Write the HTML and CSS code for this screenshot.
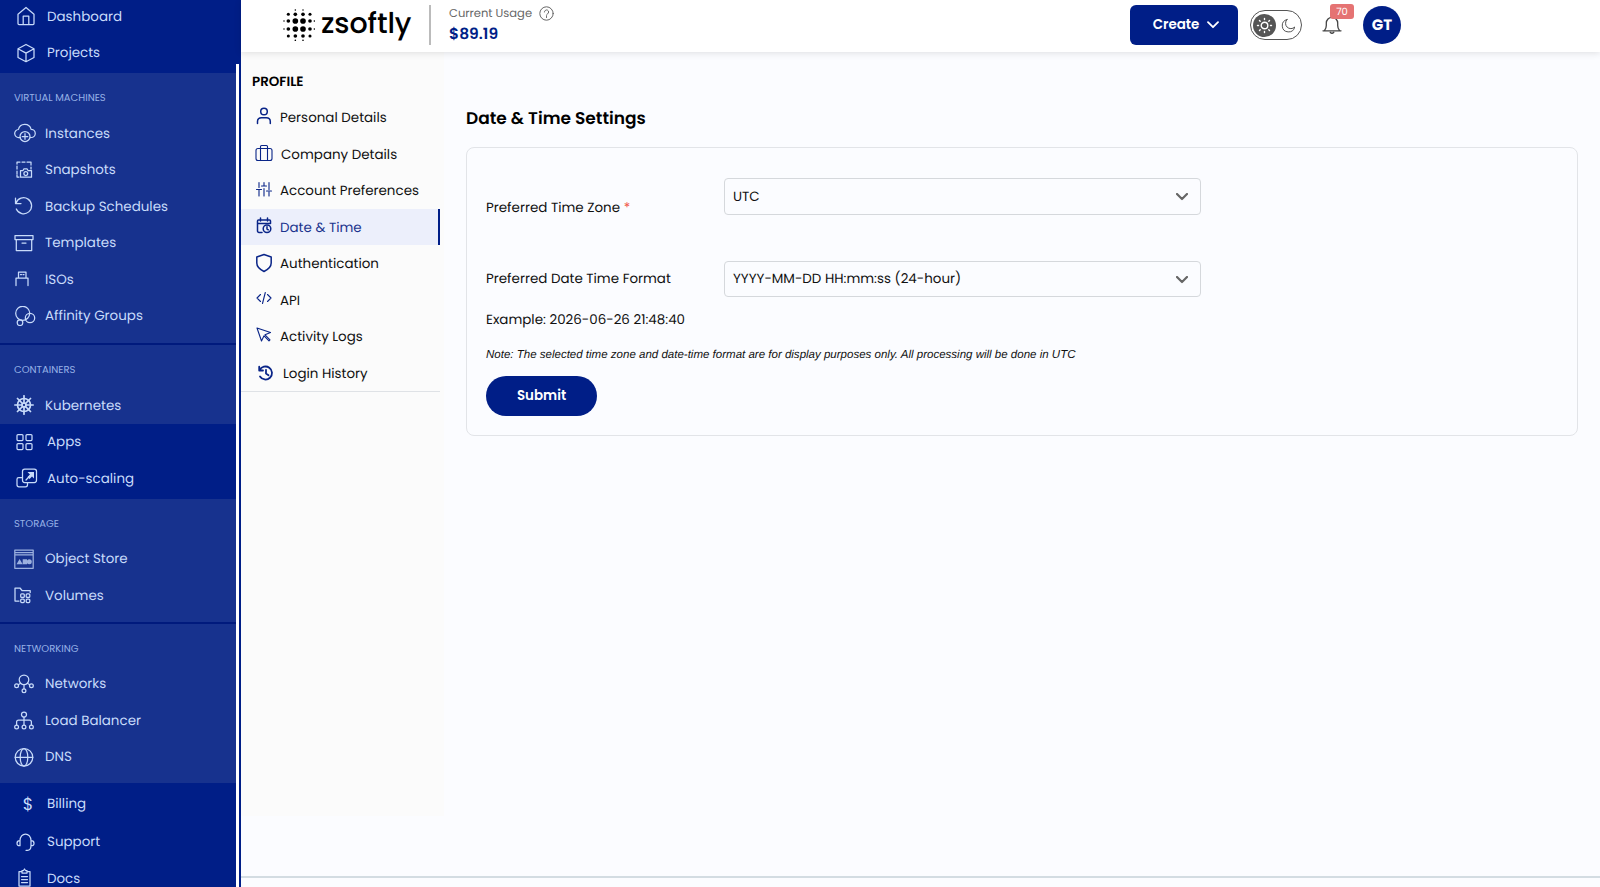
FILE: index.html
```html
<!DOCTYPE html>
<html lang="en">
<head>
    <meta charset="UTF-8">
    <meta name="viewport" content="width=device-width, initial-scale=1.0">
    <title>Date &amp; Time Settings</title>
    <link rel="stylesheet" href="styles.css">
</head>
<body>
    <div class="app">
        <aside class="sidebar">
            <nav class="menu">
                <div class="top-links">
                    <a class="item"><svg class="icon" viewBox="0 0 20 20"><path d="M2 8.2 10 1.500l8 6.700v9.300a1 1 0 0 1-1 1H3a1 1 0 0 1-1-1zM7.200 18.500V10h5.600v8.500"/></svg><span>Dashboard</span></a>
                    <a class="item"><svg class="icon" viewBox="0 0 20 20"><path d="M10 1.500 18 5.800v8.700l-8 4.200-8-4.200V5.800zM2 5.800l8 4.300 8-4.300M10 10.100v8.600"/></svg><span>Projects</span></a>
                </div>
                <div class="group first">
                    <h3>VIRTUAL MACHINES</h3>
                    <a class="item"><svg class="icon wide" viewBox="0 0 22 20"><path d="M6.500 14.500H5a4 4 0 0 1-.6-8 6.500 6.500 0 0 1 12.700-.2 4.100 4.100 0 0 1 .1 8.200h-.700"/><circle cx="11" cy="13.500" r="5"/><path d="M11 10.700v5.600M8.200 13.500h5.600"/></svg><span>Instances</span></a>
                    <a class="item"><svg class="icon" viewBox="0 0 20 20"><path d="M3 4V2h3M8 2h3M13 2h4v3M17 7v2M3 6v3M3 11v3M3 15v2h2"/><path d="M6.500 10.500H9l1-1.700h3l1 1.700h3.500v6.700h-11z"/><circle cx="11.800" cy="13.600" r="1.900"/></svg><span>Snapshots</span></a>
                    <a class="item"><svg class="icon" viewBox="0 0 20 20"><path d="M1.500 2v5.500H7M2 7.300A8 8 0 1 1 2.300 13"/></svg><span>Backup Schedules</span></a>
                    <a class="item"><svg class="icon" viewBox="0 0 20 20"><path d="M1 2.500h18v4H1zM2.300 6.500v11h15.400v-11M8 10h4"/></svg><span>Templates</span></a>
                    <a class="item"><svg class="icon" viewBox="0 0 20 20"><path d="M4.500 9V3h7.500v6M2 16.500V9h12v7.500M6.500 5.500h1M9 5.500h1"/></svg><span>ISOs</span></a>
                    <a class="item"><svg class="icon wide" viewBox="0 0 22 20"><circle cx="8.700" cy="7.300" r="7"/><circle cx="16" cy="12" r="4.700"/><circle cx="6" cy="16.700" r="2.800"/></svg><span>Affinity Groups</span></a>
                </div>
                <div class="group short">
                    <h3>CONTAINERS</h3>
                    <a class="item"><svg class="icon wheel" viewBox="0 0 20 20"><circle cx="10" cy="10" r="6.500"/><circle cx="10" cy="10" r="2"/><path d="M10 .8V8M10 12v7.200M.8 10H8M12 10h7.200M3.500 3.500l5 5M11.500 11.500l5 5M16.500 3.500l-5 5M8.500 11.500l-5 5"/></svg><span>Kubernetes</span></a>
                </div>
                <div class="plain">
                    <a class="item"><svg class="icon left" viewBox="0 0 20 20"><rect x="2" y="2.500" width="6" height="6" rx="1"/><rect x="11" y="2.500" width="6" height="6" rx="1"/><rect x="2" y="11.500" width="6" height="6" rx="1"/><rect x="11" y="11.500" width="6" height="6" rx="1"/></svg><span>Apps</span></a>
                    <a class="item"><svg class="icon wide" viewBox="0 0 22 20"><rect x="6.500" y="1" width="14" height="13.500" rx="2.200"/><path d="M6.500 9.500H2.700A1.700 1.700 0 0 0 1 11.200v5.600a2 2 0 0 0 2 2h6.500a2 2 0 0 0 2-2v-2.300M10 12l6.500-7"/><path class="fill" d="M11.500 4H18v6.500l-2-2-2.500 2.500-2-2L14 6.500z"/></svg><span>Auto-scaling</span></a>
                </div>
                <div class="group">
                    <h3>STORAGE</h3>
                    <a class="item"><svg class="icon store" viewBox="0 0 20 20"><path d="M.8 1h18.400v18.300H.8zM1 3.500h18M1 5.800h18"/><path class="fill" d="m2.500 15.300 3.100-5.300 3.100 5.300zM8.700 10.200H13v5.100H8.700z"/><circle class="fill" cx="15.300" cy="12.700" r="2.500"/></svg><span>Object Store</span></a>
                    <a class="item"><svg class="icon" viewBox="0 0 20 20"><path d="M5 16H1V3h5l2 2.500h8.200V7.500"/><rect x="6.700" y="8.800" width="3.600" height="3.600" rx="1"/><rect x="12.200" y="8.800" width="3.600" height="3.600" rx="1"/><rect x="6.700" y="14" width="3.600" height="3.600" rx="1"/><rect x="12.200" y="14" width="3.600" height="3.600" rx="1"/></svg><span>Volumes</span></a>
                </div>
                <div class="group last">
                    <h3>NETWORKING</h3>
                    <a class="item"><svg class="icon" viewBox="0 0 20 20"><circle cx="10" cy="5.800" r="4.800"/><path d="M6.700 9.300l-2.500 1.500M13.300 9.300l2.500 1.500M10 10.600V15"/><circle cx="2.600" cy="11.800" r="1.900"/><circle cx="17.400" cy="11.800" r="1.900"/><circle cx="10" cy="16.800" r="1.900"/></svg><span>Networks</span></a>
                    <a class="item"><svg class="icon" viewBox="0 0 20 20"><circle cx="10" cy="4.500" r="2.500"/><path d="M10 7v8M2.600 15v-3q0-2 2-2h10.800q2 0 2 2v3"/><circle cx="2.600" cy="16.900" r="1.900"/><circle cx="10" cy="16.900" r="1.900"/><circle cx="17.400" cy="16.900" r="1.900"/></svg><span>Load Balancer</span></a>
                    <a class="item"><svg class="icon" viewBox="0 0 20 20"><circle cx="10" cy="10.300" r="8.800"/><ellipse cx="10" cy="10.300" rx="3.800" ry="8.800"/><path d="M1.200 10.300h17.600"/></svg><span>DNS</span></a>
                </div>
                <div class="plain bottom">
                    <a class="item billing"><span class="dollar">$</span><span>Billing</span></a>
                    <a class="item support"><svg class="icon" viewBox="0 0 20 20"><path d="M4 13.500V8.500a5.500 6.500 0 0 1 11 0v5q0 4.800-3.500 4.800H10M4 8.500q-3 0-3 2.700t3 2.500M15 8.500q3 0 3 2.700t-3 2.500"/></svg><span>Support</span></a>
                    <a class="item"><svg class="icon left" viewBox="0 0 20 20"><path d="M7 3.500H4v14.500h11V3.500h-3M7 5V2.500h1.500L9.500 1l1 1.500H12V5zM6.500 8.500h6M6.500 11.500h6M6.500 14.500h6"/></svg><span>Docs</span></a>
                </div>
            </nav>
            <div class="scroll-track"></div>
        </aside>

        <div class="page">
            <header class="header">
                <div class="logo">
                    <svg width="32" height="32" viewBox="0 0 96 96">
                        <g><circle cx="37" cy="36" r="8.500"/><circle cx="60" cy="36" r="8.500"/><circle cx="37" cy="60" r="8.500"/><circle cx="60" cy="60" r="8.500"/></g>
                        <g><circle cx="16" cy="16" r="4.600"/><circle cx="37" cy="16" r="5.500"/><circle cx="60" cy="16" r="5.500"/><circle cx="81" cy="16" r="4.600"/><circle cx="16" cy="36" r="5.500"/><circle cx="81" cy="36" r="5.500"/><circle cx="16" cy="60" r="5.500"/><circle cx="81" cy="60" r="5.500"/><circle cx="16" cy="81" r="4.600"/><circle cx="37" cy="81" r="5.500"/><circle cx="60" cy="81" r="5.500"/><circle cx="81" cy="81" r="4.600"/></g>
                        <g><circle cx="37" cy="3" r="2.300"/><circle cx="60" cy="3" r="2.300"/><circle cx="37" cy="94" r="2.300"/><circle cx="60" cy="94" r="2.300"/><circle cx="3" cy="36" r="2.300"/><circle cx="3" cy="60" r="2.300"/><circle cx="94" cy="36" r="2.300"/><circle cx="94" cy="60" r="2.300"/></g>
                    </svg>
                    <span>zsoftly</span>
                </div>
                <div class="usage">
                    <div class="usage-label"><span>Current Usage</span><svg width="15" height="15" viewBox="0 0 15 15"><circle cx="7.500" cy="7.500" r="6.700"/><path d="M5.400 6a2.100 2.100 0 1 1 3.200 1.800q-1.100.6-1.100 1.500M7.500 10.500v1"/></svg></div>
                    <div class="usage-value">$89.19</div>
                </div>
                <button class="create-btn">Create<svg width="12" height="8" viewBox="0 0 12 8"><path d="m1 1.200 5 5 5-5"/></svg></button>
                <div class="theme-toggle">
                    <span class="sun"><svg width="17" height="17" viewBox="0 0 17 17"><circle cx="8.500" cy="8.500" r="3.300"/><path d="M8.500 1.500v1M8.500 14.500v1M1.500 8.500h1M14.500 8.500h1M3.500 3.500l.7.7M12.800 12.800l.7.7M13.500 3.500l-.7.7M4.200 12.800l-.7.7"/></svg></span>
                    <svg class="moon" width="15" height="15" viewBox="0 0 15 15"><path d="M6 1.500A6.300 6.300 0 1 0 13.700 9 5.300 5.300 0 0 1 6 1.500z"/></svg>
                </div>
                <div class="bell">
                    <svg width="20" height="20" viewBox="0 0 20 20"><path d="M1 15.800h18M2.500 15.500q1.800-2 1.800-5V8a5.700 5.700 0 0 1 11.400 0v2.500q0 3 1.800 5"/><path d="M8.200 17.300q1.800 2 3.600 0"/></svg>
                    <span class="badge">70</span>
                </div>
                <div class="avatar">GT</div>
            </header>

            <div class="body">
                <section class="profile">
                    <h2>PROFILE</h2>
                    <div class="profile-list">
                        <a class="link"><svg viewBox="0 0 18 18"><circle cx="9" cy="4.500" r="3.300"/><path d="M2.500 16.500v-2q0-3.800 4-3.800h4.800q4 0 4 3.800v2"/></svg><span>Personal Details</span></a>
                        <a class="link company"><svg class="thin" viewBox="0 0 18 18"><rect x="1" y="4.500" width="16" height="12" rx="2"/><path d="M5.500 16.500V2.500q0-1 1-1h5q1 0 1 1v14"/></svg><span>Company Details</span></a>
                        <a class="link"><svg class="thin" viewBox="0 0 18 18"><path d="M4 2.500v5M4 10v6M9 2.500v3M9 8.500v7.500M14 2.500v7M14 12v4M1.500 9.500h5M6.500 6h5M11.500 11h5"/></svg><span>Account Preferences</span></a>
                        <a class="link active"><svg viewBox="0 0 18 18"><path d="M7 15.500H4A1.500 1.500 0 0 1 2.500 14V4Q2.500 3 3.500 3h11q1 0 1 1v2.500M2.500 6.500h13M5.500 1v3M12.500 1v3"/><circle cx="12" cy="11.700" r="3.800"/><path d="M12 9.700v2.300l1.300.8"/></svg><span>Date &amp; Time</span></a>
                        <a class="link"><svg class="shield" viewBox="0 0 18 20"><path d="M9 1.500 16.200 4v6q0 5-7.200 8.500Q1.800 15 1.800 10V4z"/></svg><span>Authentication</span></a>
                        <a class="link"><svg class="thin" viewBox="0 0 18 18"><path d="M5.500 4.500 2 8l3.500 3.500M12.500 4.500 16 8l-3.500 3.500M10.300 2.500l-2.800 11"/></svg><span>API</span></a>
                        <a class="link"><svg class="thin" viewBox="0 0 18 18"><path d="m2 2 13.500 4.500-5.500 2.300 5 5-1 1-5-5-2.500 5.200z"/></svg><span>Activity Logs</span></a>
                        <a class="link history"><svg class="thick" viewBox="0 0 18 18"><path d="M2.200 2.700v3.800H6M2.600 6.300A6.500 6.500 0 1 1 3 12.500M9 5.800V9.500l2.500 1.700"/></svg><span>Login History</span></a>
                    </div>
                </section>

                <main class="content">
                    <h1>Date &amp; Time Settings</h1>
                    <form class="card">
                        <div class="row zone">
                            <label>Preferred Time Zone <span class="required">*</span></label>
                            <div class="select"><span>UTC</span><svg width="12" height="8" viewBox="0 0 12 8"><path d="m1 1 5 5 5-5"/></svg></div>
                        </div>
                        <div class="row format">
                            <label>Preferred Date Time Format</label>
                            <div class="select"><span>YYYY-MM-DD HH:mm:ss (24-hour)</span><svg width="12" height="8" viewBox="0 0 12 8"><path d="m1 1 5 5 5-5"/></svg></div>
                        </div>
                        <p class="example">Example: 2026-06-26 21:48:40</p>
                        <p class="note">Note: The selected time zone and date-time format are for display purposes only. All processing will be done in UTC</p>
                        <button type="button" class="submit-btn">Submit</button>
                    </form>
                </main>
            </div>
            <footer class="footer"></footer>
        </div>
    </div>
</body>
</html>
```

FILE: styles.css
```css
* {
    box-sizing: border-box;
}
body {
    margin: 0;
    height: 887px;
    overflow: hidden;
    font-family: Poppins, Inter, sans-serif;
    font-size: 13.45px;
    text-rendering: geometricPrecision;
    color: #111;
    background-color: #fbfcff;
}
h1, h2, h3, p {
    margin: 0;
}
svg {
    flex: none;
    fill: none;
    stroke: currentColor;
    stroke-linecap: round;
    stroke-linejoin: round;
}
.app {
    display: flex;
    height: 887px;
}

/* Sidebar */
.sidebar {
    display: flex;
    width: 241px;
    height: 887px;
    flex: none;
    overflow: hidden;
    background-color: #001e87;
    color: #c8dbfa;
}
.menu {
    width: 236px;
    margin-top: -2px;
}
.scroll-track {
    width: 3px;
    margin-top: 64px;
    background-color: #fff;
}
.top-links {
    height: 75px;
}
.item {
    display: flex;
    align-items: center;
    gap: 11px;
    height: 36.5px;
    padding-left: 14px;
    line-height: 16px;
    white-space: nowrap;
}
.item span {
    padding-top: 1px;
}
.top-links .item, .plain .item {
    padding-left: 16px;
}
.icon {
    width: 20px;
    height: 20px;
    stroke-width: 1.25;
}
.icon.wide {
    width: 22px;
    margin-right: -2px;
}
.icon.left {
    margin-left: -1px;
    margin-right: 1px;
}
.icon .fill {
    fill: currentColor;
    stroke: none;
}
.wheel {
    stroke-width: 1.7;
}
.store {
    opacity: 0.75;
}
.group {
    padding: 8px 0 8px;
    background-color: #17328e;
    border-bottom: 2px solid #001a7d;
}
.group.first {
    padding-bottom: 9px;
}
.group.short {
    padding-bottom: 0;
    border-bottom: 0;
}
.group.last {
    border-bottom: 0;
}
.group h3 {
    height: 34px;
    padding-left: 14px;
    font-size: 10px;
    font-weight: 400;
    line-height: 33px;
    color: #96b1e6;
}
.plain {
    height: 75px;
}
.item .dollar {
    width: 20px;
    padding-left: 4px;
    font-size: 17px;
    text-align: center;
}
.plain .billing {
    height: 40px;
}
.plain .support {
    height: 37px;
}

/* Header */
.page {
    flex: 1;
    min-width: 0;
}
.header {
    position: relative;
    display: flex;
    align-items: center;
    height: 52px;
    padding-left: 42px;
    background-color: #fff;
    box-shadow: 0 1px 7px rgba(0, 0, 0, 0.12);
}
.logo {
    display: flex;
    align-items: center;
    width: 146px;
    gap: 6px;
    margin-bottom: 3px;
    color: #000;
}
.logo svg {
    fill: #000;
    stroke: none;
}
.logo span {
    font-size: 28.5px;
    font-weight: 500;
    line-height: 36px;
    margin-top: -4px;
    letter-spacing: -0.1px;
}
.usage {
    width: 701px;
    height: 40px;
    margin-bottom: 3px;
    padding-left: 18px;
    border-left: 2px solid #bbb;
}
.usage-label {
    display: flex;
    align-items: center;
    gap: 7px;
    height: 18px;
    font-size: 11.5px;
    color: #666;
}
.usage-label span {
    padding-top: 1px;
}
.usage-value {
    font-size: 15.5px;
    font-weight: 600;
    line-height: 23px;
    color: #001e87;
}
.create-btn {
    display: flex;
    align-items: center;
    justify-content: center;
    gap: 8px;
    width: 108px;
    height: 40px;
    margin: 0 12px 3px 0;
    padding: 1px 0 0 4px;
    border: none;
    border-radius: 6px;
    background-color: #001e87;
    color: #fff;
    font-family: inherit;
    font-size: 13.45px;
    font-weight: 600;
}
.create-btn svg {
    stroke-width: 1.8;
}
.theme-toggle {
    display: flex;
    align-items: center;
    gap: 5px;
    width: 52px;
    height: 30px;
    margin: 0 20px 2px 0;
    padding-left: 2px;
    border: 1px solid #555;
    border-radius: 15px;
    color: #555;
}
.sun {
    display: flex;
    align-items: center;
    justify-content: center;
    width: 23px;
    height: 23px;
    border-radius: 50%;
    background-color: #555;
    color: #fff;
}
.sun svg {
    stroke-width: 1.4;
}
.bell {
    position: relative;
    height: 20px;
    margin: 0 21px 2px 0;
    color: #444;
}
.bell svg {
    display: block;
    stroke-width: 1.3;
}
.badge {
    position: absolute;
    top: -11px;
    left: 8px;
    width: 24px;
    height: 15px;
    border-radius: 3px;
    background-color: #e57373;
    color: #fff;
    font-size: 10px;
    line-height: 16px;
    text-align: center;
}
.avatar {
    width: 38px;
    height: 38px;
    margin-bottom: 2px;
    border-radius: 50%;
    background-color: #001e87;
    color: #fff;
    font-size: 15px;
    font-weight: 700;
    line-height: 39px;
    text-align: center;
}

/* Profile menu */
.body {
    display: flex;
    height: 824px;
}
.profile {
    width: 203px;
    height: 764px;
    padding-top: 18px;
    background-color: #fbfbfb;
}
.profile h2 {
    padding-left: 11px;
    font-size: 13.45px;
    font-weight: 600;
    line-height: 23px;
    height: 29px;
    color: #000;
}
.profile-list {
    width: 199px;
    border-bottom: 1px solid #dfe2e6;
}
.link {
    display: flex;
    align-items: center;
    gap: 7px;
    height: 36.5px;
    padding-left: 14px;
    white-space: nowrap;
}
.link span {
    padding-top: 2px;
}
.link svg {
    width: 18px;
    height: 18px;
    stroke-width: 1.5;
    color: #0a2588;
    margin-bottom: 2px;
}
.link .thin {
    stroke-width: 1.1;
}
.link .thick {
    stroke-width: 1.8;
    margin-bottom: 0;
}
.link .shield {
    height: 20px;
    margin-bottom: 0;
}
.company {
    gap: 8px;
}
.company svg {
    margin-bottom: 1px;
}
.history {
    gap: 8px;
    padding-left: 16px;
}
.link.active {
    background-color: #eceffb;
    border-right: 2px solid #001e87;
    color: #1c348e;
}

/* Settings form */
.content {
    flex: 1;
    padding: 52px 22px 0;
}
.content h1 {
    font-size: 17px;
    font-weight: 600;
    line-height: 28px;
    margin-bottom: 15px;
    color: #000;
}
.card {
    height: 289px;
    padding: 30px 19px 0;
    border: 1px solid #e2e4e8;
    border-radius: 8px;
}
.row {
    display: flex;
    align-items: center;
    height: 36.5px;
}
.row label {
    width: 238px;
}
.zone {
    margin-bottom: 46px;
}
.zone label {
    padding-top: 23px;
}
.required {
    color: #f05545;
}
.select {
    display: flex;
    align-items: center;
    justify-content: space-between;
    width: 477px;
    height: 36.5px;
    padding: 1px 12px 0 8px;
    border: 1px solid #d5d8dc;
    border-radius: 4px;
}
.select svg {
    stroke-width: 2.2;
    color: #666;
    margin-top: 1px;
}
.example {
    margin-top: 12px;
    line-height: 22px;
}
.note {
    margin-top: 16px;
    font-family: "Liberation Sans", Arial, sans-serif;
    font-size: 11.52px;
    font-style: italic;
    line-height: 16px;
}
.submit-btn {
    display: block;
    width: 111px;
    height: 40px;
    margin-top: 13px;
    border: none;
    border-radius: 20px;
    background-color: #001e87;
    color: #fff;
    font-family: inherit;
    font-size: 13.45px;
    font-weight: 600;
}
.footer {
    height: 11px;
    border-top: 2px solid #d3dce2;
}
```
